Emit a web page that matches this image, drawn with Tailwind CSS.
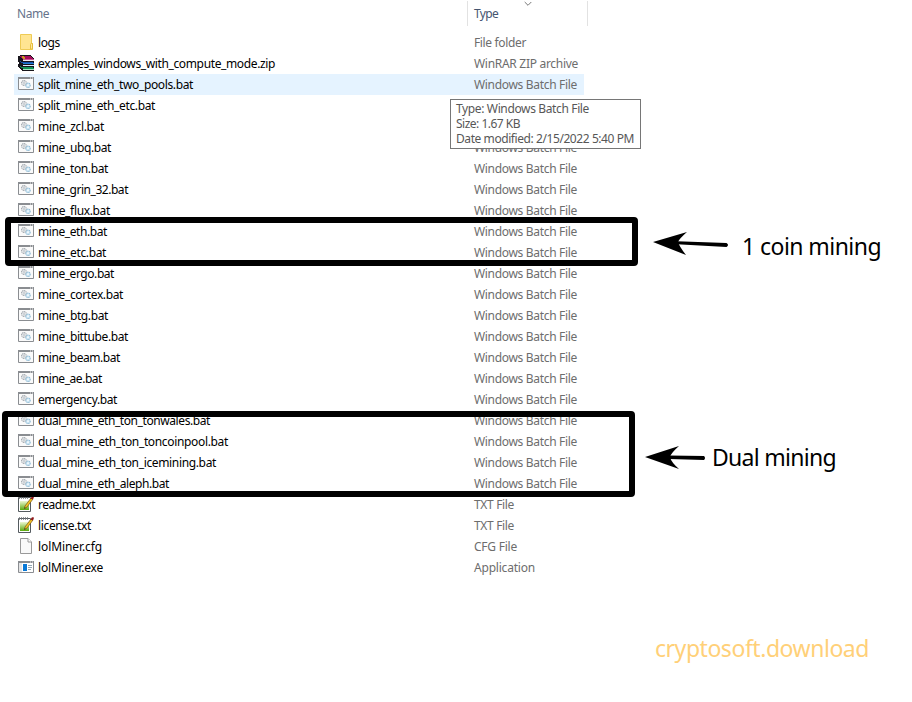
<!DOCTYPE html>
<html lang="en">
<head>
<meta charset="utf-8">
<title>lolMiner files</title>
<script src="https://cdn.jsdelivr.net/npm/@tailwindcss/browser@4"></script>
</head>
<body class="bg-white">
<svg class="absolute w-0 h-0">
  <defs><linearGradient id="green" x2="0" y2="1"><stop offset="0" stop-color="#edf7cf"/><stop offset="1" stop-color="#59a90c"/></linearGradient></defs>
  <symbol id="folder" viewBox="0 0 16 16"><path d="M2.5.5h11v9h1v6h-12z" fill="#ffe592" stroke="#eecb55"/><path d="M12.5 15V10.5q0-1 1-1h1V15z" fill="#ffe9a2" stroke="#e6bd3d"/></symbol>
  <symbol id="zip" viewBox="0 0 16 16" shape-rendering="crispEdges">
    <path d="M0 1 3 0h10l3 4v12H5L0 12V9l1-1-1-2z" fill="#17151c"/>
    <path d="M1 1h11l3 3H4z" fill="#a40b5c"/><path d="M5 4h11v1H5z" fill="#d04f90"/><path d="M5 5h11v1H5z" fill="#f5e8ef"/>
    <path d="M1 6l3 2h11V7H4z" fill="#1450a8"/><path d="M5 8h11v1H5z" fill="#1f7cd4"/><path d="M5 10h11v1H5z" fill="#d9eaff"/>
    <path d="M1 11l3 2h11v-1H4z" fill="#109454"/><path d="M5 13h11v1H5z" fill="#109454"/><path d="M5 14h11v1H5z" fill="#a7e8c4"/>
    <path d="M4 1h2v1h1v2H5V3H4z" fill="#c99a20"/>
  </symbol>
  <symbol id="bat" viewBox="0 0 16 16">
    <path d="M.5 1.5h15v12H.5z" fill="#fafafa" stroke="#8a8d91"/><path d="M0 1h16v2H0z" fill="#8a8d91"/><path d="M12 2h1M14 2h1" stroke="#fff" stroke-width=".9"/>
    <circle cx="6" cy="7" r="2.4" fill="#eef0f2" stroke="#9ca3a9" stroke-width="1.1" stroke-dasharray="1.2 .5"/><circle cx="6" cy="7" r=".8" fill="#a5acb2"/>
    <circle cx="10" cy="9.3" r="2.2" fill="#d9edf8" stroke="#8dbad5" stroke-width="1.1" stroke-dasharray="1.2 .5"/><circle cx="10" cy="9.3" r=".7" fill="#fff"/>
  </symbol>
  <symbol id="txt" viewBox="0 0 16 16">
    <path d="M.5 1.5h12v14H.5z" fill="#fff" stroke="#555b60"/><path d="M2 5h9v9H2z" fill="url(#green)"/>
    <path d="M1.5 0v3M3.5 0v3M5.5 0v3M7.5 0v3M9.5 0v3" stroke="#73777b" stroke-width=".8"/>
    <path d="M6.5 12.5 7 10 13 2l2 1-6 8z" fill="#f5c322" stroke="#765414" stroke-width=".7"/><path d="M12.5 2.5 14 .2l2 .4-.5 2-1 1z" fill="#8d1719"/><path d="M6.4 12.7l.3-1.5 1 .7z" fill="#222"/>
  </symbol>
  <symbol id="cfg" viewBox="0 0 16 16"><path d="M2.5.5H10L13.5 4v11.5h-11z" fill="#f9f9f9" stroke="#999"/><path d="M10 .5V4h3.5" fill="#fff" stroke="#999"/></symbol>
  <symbol id="exe" viewBox="0 0 16 16"><path d="M.5 2.5h15v11H.5z" fill="#fff" stroke="#8a8d91"/><path d="M0 2h16v2H0z" fill="#8a8d91"/><path d="M12 3h1M14 3h1" stroke="#fff" stroke-width=".8"/><path d="M1 4h3v9H1z" fill="#e3e4e5"/><path d="M5 5h4v7H5z" fill="#0878d7"/><path d="M10 6.5h4M10 8.5h4M10 10.5h3" stroke="#879eae" stroke-width=".9"/></symbol>
</svg>
<main class="relative w-[912px] h-[702px] overflow-hidden bg-white font-['Noto_Sans','Open_Sans',sans-serif] text-[12px] leading-[21px] text-black">
  <header class="flex h-8 text-[#44546f]">
    <div class="w-[467px] pl-[17px] pt-[3px] text-[#66738a]"><span data-w="32">Name</span></div>
    <div class="relative w-[121px] h-[25px] mt-px border-x border-[#e2e2e2] pl-[6px] pt-[2px]"><span data-w="24">Type</span>
      <svg class="absolute left-[56px] top-0 w-2 h-[6px]" viewBox="0 0 8 6"><path d="M.7 1 4 4.3 7.3 1" fill="none" stroke="#777"/></svg>
    </div>
  </header>
  <section id="files" class="ml-[14px] w-[570px]"></section>

  <aside class="absolute left-[450px] top-[99px] w-[191px] h-[50px] border border-[#767676] bg-white pl-[5px] pt-px leading-[15px] text-[#575757]">
    <p class="h-[15px] whitespace-nowrap"><span data-w="133">Type: Windows Batch File</span></p>
    <p class="h-[15px] whitespace-nowrap"><span data-w="64">Size: 1.67 KB</span></p>
    <p class="h-[15px] whitespace-nowrap"><span data-w="178">Date modified: 2/15/2022 5:40 PM</span></p>
  </aside>
  <div class="absolute left-[5px] top-[217px] w-[633px] h-[49px] border-[6px] border-black rounded-[4px]"></div>
  <div class="absolute left-[2px] top-[411px] w-[633px] h-[86px] border-[6px] border-black rounded-[4px]"></div>
  <svg class="absolute left-[640px] top-[225px] w-[100px] h-[40px]" viewBox="640 225 100 40"><path d="M653 242 687 232q-8 7-9 10 1 4 8 13z"/><path d="M677 241.2 726.5 243q3 2 0 4L677 244.2z"/></svg>
  <svg class="absolute left-[640px] top-[440px] w-[72px] h-[40px]" viewBox="640 440 72 40"><path d="M645 457 679 446q-8 7-9 11 1 5 9 12z"/><path d="M669 455.5 704 456q2 2 0 4L669 459z"/></svg>
  <div class="absolute left-[742px] top-[230px] text-[23px] leading-8 whitespace-nowrap"><span data-w="139" data-size="23">1 coin mining</span></div>
  <div class="absolute left-[712px] top-[441px] text-[23px] leading-8 whitespace-nowrap"><span data-w="124" data-size="23">Dual mining</span></div>
  <div class="absolute left-[655px] top-[632px] text-[23px] leading-8 whitespace-nowrap text-[#ffd078]"><span data-w="214" data-size="23">cryptosoft.download</span></div>
</main>
<script>
const typeWidths = {"File folder":52,"WinRAR ZIP archive":104,"Windows Batch File":103,"TXT File":40,"CFG File":43,"Application":61};
const B = "Windows Batch File";
const files = [
["folder","logs",22,"File folder"],["zip","examples_windows_with_compute_mode.zip",237,"WinRAR ZIP archive"],
["bat","split_mine_eth_two_pools.bat",155,B],["bat","split_mine_eth_etc.bat",117,B],["bat","mine_zcl.bat",66,B],["bat","mine_ubq.bat",73,B],["bat","mine_ton.bat",70,B],["bat","mine_grin_32.bat",90,B],["bat","mine_flux.bat",72,B],["bat","mine_eth.bat",69,B],["bat","mine_etc.bat",68,B],["bat","mine_ergo.bat",76,B],["bat","mine_cortex.bat",85,B],["bat","mine_btg.bat",70,B],["bat","mine_bittube.bat",90,B],["bat","mine_beam.bat",82,B],["bat","mine_ae.bat",64,B],["bat","emergency.bat",79,B],["bat","dual_mine_eth_ton_tonwales.bat",172,B],["bat","dual_mine_eth_ton_toncoinpool.bat",190,B],["bat","dual_mine_eth_ton_icemining.bat",178,B],["bat","dual_mine_eth_aleph.bat",131,B],
["txt","readme.txt",57,"TXT File"],["txt","license.txt",53,"TXT File"],["cfg","lolMiner.cfg",64,"CFG File"],["exe","lolMiner.exe",65,"Application"]];
document.getElementById("files").innerHTML = files.map(([icon,name,w,type],i)=>`
<div class="flex h-[21px] pl-1 whitespace-nowrap ${i===2?"bg-[#e5f3ff]":""}">
<svg class="w-4 h-4 mt-[2px] shrink-0"><use href="#${icon}"/></svg>
<div class="w-[440px] pl-1 shrink-0"><span data-w="${w}">${name}</span></div>
<div class="text-[#6d6d6d]"><span data-w="${typeWidths[type]}">${type}</span></div></div>`).join("");
const pen = document.createElement("canvas").getContext("2d");
document.querySelectorAll("[data-w]").forEach(s=>{
  pen.font = (s.dataset.size || 12) + "px 'Noto Sans'";
  s.style.letterSpacing = (+s.dataset.w - pen.measureText(s.textContent).width) / s.textContent.length + "px";
});
</script>
</body>
</html>
